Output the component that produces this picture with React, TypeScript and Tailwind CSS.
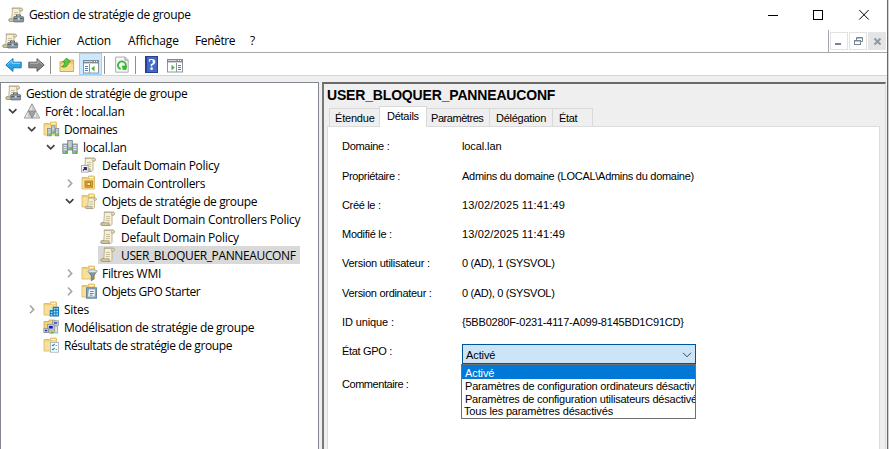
import type { ReactNode } from "react";

function Svg({ children }: { children: ReactNode }) {
  return (
    <svg width="16" height="16" viewBox="0 0 16 16" className="shrink-0 overflow-visible">
      {children}
    </svg>
  );
}

function ScrollShape() {
  return (
    <>
      <path d="M4 1.2h9c2 0 2 2.8.2 2.8H12v8.5c0 1.4-.8 2-2 2H2c-1.7 0-1.7-3 0-3h1.8L4.4 3Z" fill="#f6f0d8" stroke="#b5ab8e" strokeWidth=".9" />
      <path d="M4 1.2h9c2 0 2 2.8.2 2.8H12c-.8 0-.8-1.5 0-1.5" fill="#e9dfbb" stroke="#a79c7c" strokeWidth=".8" />
      <path d="M1.8 11.8h7.4c-.4 1 0 2.6.8 2.6H2c-1.2 0-1.5-1.8-.2-2.6Z" fill="#d9cba3" stroke="#978b6e" strokeWidth=".7" />
      <path d="M6 5.5h4M6 7.5h4M5.8 9.5h4" stroke="#c3b998" strokeWidth=".9" />
    </>
  );
}

function FolderShape() {
  return (
    <>
      <path d="M1 2.5h5l1.3 1V2c0-.8.3-1 1-1h4.2c.8 0 1 .3 1 1v12H1Z" fill="#edcf77" stroke="#d8b35c" strokeWidth=".8" />
      <path d="M8.3 1.8h4.2v1.4H8.3Z" fill="#fff6d2" />
      <path d="M1.5 4.3h11.6v9.2H1.5Z" fill="#f9e09a" />
    </>
  );
}

function ServersShape() {
  return (
    <>
      {[
        [0.8, 5],
        [10.6, 5],
        [5.7, 1.5],
      ].map(([x, y]) => (
        <g key={x}>
          <rect x={x} y={y} width="4.6" height="9.5" fill="#a6b3bb" stroke="#73818b" strokeWidth=".8" />
          <path d={`M${x + 0.8} ${y + 1.5}h3M${x + 0.8} ${y + 3.5}h3M${x + 0.8} ${y + 5.5}h3`} stroke="#e6ecf0" strokeWidth=".9" />
          <rect x={x + 2.2} y={y + 7} width="2" height="2" fill="#3ed321" />
        </g>
      ))}
    </>
  );
}

const Scroll = () => (
  <Svg>
    <ScrollShape />
  </Svg>
);

const Console = () => (
  <Svg>
    <ScrollShape />
    <path d="M8.5 9.5V8h4v1.5" fill="none" stroke="#4e5a63" />
    <rect x="5.8" y="9.7" width="9.8" height="5.2" rx=".6" fill="#8d9dab" stroke="#5d6a76" strokeWidth=".8" />
    <path d="M6.2 11.6h9" stroke="#505d68" />
    <rect x="9.7" y="10.9" width="2" height="1.7" fill="#dbe3e9" />
  </Svg>
);

const Forest = () => (
  <Svg>
    <path d="M8 .8 15.6 15H.4Z" fill="#ababab" stroke="#8c8c8c" strokeWidth=".9" strokeLinejoin="round" />
    <path d="M8 2 4.7 7.8h6.6ZM4 8.8l-3 5.6h6ZM12 8.8l-3 5.6h6Z" fill="#e6e6e6" />
    <path d="M8 2v5.8h3.3ZM4 8.8v5.6h3ZM12 8.8v5.6h3Z" fill="#c9c9c9" />
    <path d="M4.4 8h7.2L8 14.4Z" fill="#a2a2a2" stroke="#7d7d7d" strokeWidth=".6" />
  </Svg>
);

const Domains = () => (
  <Svg>
    <FolderShape />
    <g transform="translate(4 3.6) scale(.78)">
      <ServersShape />
    </g>
  </Svg>
);

const Domain = () => (
  <Svg>
    <ServersShape />
  </Svg>
);

const Shortcut = () => (
  <Svg>
    <ScrollShape />
    <rect x=".5" y="8.5" width="6.6" height="6.6" fill="#fff" stroke="#a8a8a8" />
    <path d="M2 13.6l2.8-2.8M2.6 10.6h2.6v2.6" fill="none" stroke="#26267c" strokeWidth="1.4" />
  </Svg>
);

const Unit = () => (
  <Svg>
    <FolderShape />
    <rect x="4" y="6" width="7.6" height="6.2" fill="#dba72d" stroke="#b98724" />
    <rect x="6" y="7.6" width="3.6" height="3" fill="#ffeaa5" stroke="#a57316" strokeWidth=".8" />
  </Svg>
);

const PolicyFolder = () => (
  <Svg>
    <FolderShape />
    <g transform="translate(3.8 4) scale(.8)">
      <ScrollShape />
    </g>
  </Svg>
);

const FilterFolder = () => (
  <Svg>
    <FolderShape />
    <path d="M7 6.3h9l-3.3 4.4v3.6l-2.4 1.4v-5Z" fill="#7d94a6" stroke="#526a7d" strokeWidth=".7" />
    <ellipse cx="11.5" cy="6.2" rx="4.5" ry="1.5" fill="#dce7ee" stroke="#8296a5" strokeWidth=".7" />
  </Svg>
);

const StarterFolder = () => (
  <Svg>
    <FolderShape />
    <rect x="5.4" y="4.8" width="10.2" height="10.4" fill="#86a5bc" stroke="#587890" strokeWidth=".8" />
    <path d="M8 6.5h6l-.5 7H7Z" fill="#f5f8fa" />
    <path d="M9 8.5h3.7M8.8 10.5h3.7M8.6 12.2h3" stroke="#5b7d97" strokeWidth=".9" />
  </Svg>
);

const SitesFolder = () => (
  <Svg>
    <FolderShape />
    <path d="M6.7 9h3V5.7H16v9.8H6.7Z" fill="#1677bc" />
    <path d="M10.8 7h1.6v1.6h-1.6ZM13.4 7H15v1.6h-1.6ZM10.8 9.8h1.6v1.6h-1.6ZM13.4 9.8H15v1.6h-1.6ZM7.8 10.4h1.6V12H7.8ZM7.8 13h1.6v1.5H7.8ZM10.8 12.6h1.6v1.6h-1.6ZM13.4 12.6H15v1.6h-1.6Z" fill="#a6e2ff" />
  </Svg>
);

const Modeling = () => (
  <Svg>
    <path d="M1 2.5h5V1h6v12H1Z" fill="#f3d27b" stroke="#cfa64b" strokeWidth=".8" />
    <rect x="9.5" y="1.8" width="6" height="4.4" fill="#d9dfe2" stroke="#8c969c" strokeWidth=".8" />
    <rect x="10.8" y="2.9" width="3.4" height="2" fill="#4a60cc" />
    <rect x="4.5" y="5.5" width="6.5" height="5.5" fill="#dfe4e7" stroke="#8c969c" strokeWidth=".8" />
    <rect x="5.8" y="6.8" width="4" height="2.8" fill="#1520bd" />
    <rect x="11.7" y="7" width="3" height="7" fill="#dde1e3" stroke="#979fa4" strokeWidth=".8" />
    <rect x="1" y="9.8" width="4.4" height="3.8" fill="#dfe4e7" stroke="#7a858c" strokeWidth=".8" />
    <rect x="2" y="10.8" width="2.4" height="1.6" fill="#2233c4" />
    <path d="M6 12.8h5v2H6Z" fill="#aeb8be" />
    <path d="M8 13.5h2" stroke="#31c231" />
  </Svg>
);

const Results = () => (
  <Svg>
    <FolderShape />
    <rect x="7.4" y="5.4" width="8.2" height="9.8" fill="#f9fbfc" stroke="#a1aeb7" strokeWidth=".8" />
    <path d="m9 7.8 1 1 1.6-2M9 11.8l1 1 1.6-2" fill="none" stroke="#2587bd" strokeWidth="1.1" />
    <path d="M12.5 8.5H14M12.5 12.5H14" stroke="#8d9aa3" />
  </Svg>
);

function Arrow({ back }: { back?: boolean }) {
  return (
    <svg width="17" height="16" viewBox="0 0 17 16" className={back ? "shrink-0" : "shrink-0 -scale-x-100"}>
      <path
        d="M.8 8 8 1.6v3.6h8.2v5.6H8v3.6Z"
        fill={back ? "#29a5e8" : "#858585"}
        stroke={back ? "#1777b9" : "#606060"}
        strokeLinejoin="round"
      />
      <path d="M2.5 7.6 7 3.6v2.7h8" fill="none" stroke={back ? "#8fdcff" : "#b5b5b5"} />
    </svg>
  );
}

const UpFolder = () => (
  <svg width="16" height="16" viewBox="0 0 16 16">
    <path d="M1 4.8h5L7.5 3H14.6V14.5H1Z" fill="#efcc72" stroke="#c9a352" strokeWidth=".9" />
    <path d="M1.6 7.2h12.5v6.8H1.6Z" fill="#f8dd92" />
    <path d="M2.5 9.6C5 9 5.6 7.4 5.6 5H3.6L7.6 1 11.5 5H9.4c0 4-3 6.2-6.9 4.6Z" fill="#5ac83c" stroke="#2e9020" strokeWidth=".7" />
  </svg>
);

function PaneIcon({ right }: { right?: boolean }) {
  return (
    <svg width="16" height="15" viewBox="0 0 16 15">
      <rect x=".5" y="1.5" width="15" height="12.5" fill="#fff" stroke="#8d969e" />
      <path d="M0 1h16v4H0Z" fill="#808a93" />
      <path d="M1 2.5h8.5M1 4.5h14" stroke="#dfe5e9" strokeWidth=".8" />
      <path d="M11 2.5h1M13 2.5h1" stroke="#fff" />
      {right ? (
        <g>
          <path d="M9.5 5v9" stroke="#8d969e" />
          <path d="M11 7.5h3M11 9.5h3M11 11.5h3" stroke="#4783b4" />
          <path d="m4.5 6.8 3.2 2.8-3.2 2.8Z" fill="#42b535" />
        </g>
      ) : (
        <g>
          <path d="M6.5 5v9" stroke="#8d969e" />
          <path d="M2 7.5h3M2 9.5h3M2 11.5h3" stroke="#4783b4" />
          <path d="m11.5 6.8-3.2 2.8 3.2 2.8Z" fill="#42b535" />
        </g>
      )}
    </svg>
  );
}

const Refresh = () => (
  <svg width="14" height="17" viewBox="0 0 14 17">
    <path d="M.6 1h9.6l3 3v12.2H.6Z" fill="#f6f6f6" stroke="#b0b0b0" />
    <path d="M10 1v3.2h3.2" fill="#ddd" stroke="#a2a2a2" />
    <path d="M5.6 13A3.9 3.9 0 1 1 10.6 10.5" fill="none" stroke="#39b634" strokeWidth="1.9" />
    <path d="M7 9.6 12.2 10l-1 4-3.6-.2Z" fill="#39b634" />
  </svg>
);

const Help = () => (
  <div className="flex h-[17px] w-[13px] items-center justify-center border border-l-2 border-[#25418f] bg-[#4567c8] font-['Liberation_Serif',serif] text-[16px] leading-none font-bold text-white">
    ?
  </div>
);

type Item = { level: number; label: string; icon: () => ReactNode; open?: boolean; closed?: boolean; selected?: boolean; track: string };

const tree: Item[] = [
  { level: 1, label: "Forêt : local.lan", icon: Forest, open: true, track: "tracking-[-0.3px]" },
  { level: 2, label: "Domaines", icon: Domains, open: true, track: "tracking-[-0.4px]" },
  { level: 3, label: "local.lan", icon: Domain, open: true, track: "tracking-[-0.25px]" },
  { level: 4, label: "Default Domain Policy", icon: Shortcut, track: "tracking-[-0.3px]" },
  { level: 4, label: "Domain Controllers", icon: Unit, closed: true, track: "tracking-[-0.34px]" },
  { level: 4, label: "Objets de stratégie de groupe", icon: PolicyFolder, open: true, track: "tracking-[-0.38px]" },
  { level: 5, label: "Default Domain Controllers Policy", icon: Scroll, track: "tracking-[-0.28px]" },
  { level: 5, label: "Default Domain Policy", icon: Scroll, track: "tracking-[-0.27px]" },
  { level: 5, label: "USER_BLOQUER_PANNEAUCONF", icon: Scroll, selected: true, track: "tracking-[-0.37px]" },
  { level: 4, label: "Filtres WMI", icon: FilterFolder, closed: true, track: "tracking-[-0.3px]" },
  { level: 4, label: "Objets GPO Starter", icon: StarterFolder, closed: true, track: "tracking-[-0.45px]" },
  { level: 2, label: "Sites", icon: SitesFolder, closed: true, track: "tracking-[-0.3px]" },
  { level: 2, label: "Modélisation de stratégie de groupe", icon: Modeling, track: "tracking-[-0.34px]" },
  { level: 2, label: "Résultats de stratégie de groupe", icon: Results, track: "tracking-[-0.4px]" },
];

const indents = ["", "pl-[5px]", "pl-[24px]", "pl-[43px]", "pl-[62px]", "pl-[81px]"];

function TreeRow({ item }: { item: Item }) {
  const Icon = item.icon;
  return (
    <div className={`flex h-[18px] items-center ${indents[item.level]}`}>
      <div className="w-[16px] shrink-0">
        {(item.open || item.closed) && (
          <svg width="12" height="12" viewBox="0 0 12 12" className="ml-px">
            {item.open ? (
              <path d="m2 4.2 3.7 3.7 3.7-3.7" fill="none" stroke="#404040" strokeWidth="1.7" />
            ) : (
              <path d="m4 2.5 3.7 3.9L4 10.3" fill="none" stroke="#a6a6a6" strokeWidth="1.6" />
            )}
          </svg>
        )}
      </div>
      <div className={`flex h-[18px] items-center pl-[2px] whitespace-nowrap ${item.selected ? "w-[202px] bg-[#d9d9d9]" : ""}`}>
        <Icon />
        <span className={`ml-[5px] pt-px leading-[19px] ${item.track}`}>{item.label}</span>
      </div>
    </div>
  );
}

const details = [
  { label: "Domaine :", value: "local.lan", h: "h-[30px]", lt: "tracking-[-0.3px]", vt: "tracking-[-0.1px]" },
  { label: "Propriétaire :", value: "Admins du domaine (LOCAL\\Admins du domaine)", h: "h-[29px]", lt: "tracking-[-0.35px]", vt: "tracking-[-0.28px]" },
  { label: "Créé le :", value: "13/02/2025 11:41:49", h: "h-[29px]", lt: "tracking-[-0.33px]", vt: "tracking-[0.16px]" },
  { label: "Modifié le :", value: "13/02/2025 11:41:49", h: "h-[29px]", lt: "tracking-[-0.28px]", vt: "tracking-[0.16px]" },
  { label: "Version utilisateur :", value: "0 (AD), 1 (SYSVOL)", h: "h-[30px]", lt: "tracking-[-0.25px]", vt: "tracking-[-0.33px]" },
  { label: "Version ordinateur :", value: "0 (AD), 0 (SYSVOL)", h: "h-[29px]", lt: "tracking-[-0.29px]", vt: "tracking-[-0.33px]" },
  { label: "ID unique :", value: "{5BB0280F-0231-4117-A099-8145BD1C91CD}", h: "h-[29px]", lt: "tracking-[-0.12px]", vt: "tracking-[-0.21px]" },
];

const choices = [
  { label: "Paramètres de configuration ordinateurs désactiv", track: "tracking-[-0.21px]" },
  { label: "Paramètres de configuration utilisateurs désactivé", track: "tracking-[-0.23px]" },
  { label: "Tous les paramètres désactivés", track: "tracking-[-0.17px]" },
];

export default function App() {
  return (
    <div className="flex h-[449px] w-[889px] overflow-hidden bg-white font-['Open_Sans','Noto_Sans',sans-serif] text-[12px] text-black">
      <div className="flex min-w-0 flex-1 flex-col">
        <header className="flex h-[28px] shrink-0 items-center pt-[2px] pl-[8px]">
          <Console />
          <span className="ml-[5px] tracking-[-0.37px]">Gestion de stratégie de groupe</span>
          <svg width="120" height="12" viewBox="0 0 120 12" className="mr-[12px] ml-auto" fill="none" stroke="#000">
            <path d="M13 6.5h10M104.3 1l9.4 9.5M113.7 1l-9.4 9.5" />
            <rect x="58.5" y="1.5" width="9" height="9" />
          </svg>
        </header>

        <nav className="flex h-[25px] shrink-0 border-b border-[#a9a9a9]">
          <div className="flex flex-1 items-center pt-px pl-[2px]">
            <Console />
            <span className="ml-[8px] w-[51px] tracking-[-0.3px]">Fichier</span>
            <span className="w-[51px] tracking-[-0.2px]">Action</span>
            <span className="w-[67px] tracking-[-0.1px]">Affichage</span>
            <span className="w-[55px] tracking-[-0.4px]">Fenêtre</span>
            <span>?</span>
          </div>
          <div className="mt-[2px] mr-px flex gap-px border-l border-[#a0a4ae] pt-[2px] pl-px">
            <div className="h-[18px] w-[18px] border border-[#e2e2e2]">
              <svg width="16" height="16" viewBox="0 0 16 16">
                <path d="M4 11h6" stroke="#768696" strokeWidth="2" />
              </svg>
            </div>
            <div className="h-[18px] w-[18px] border border-[#e2e2e2]">
              <svg width="16" height="16" viewBox="0 0 16 16" fill="none" stroke="#768696">
                <path d="M6.5 7V4.5h6v4H11M6 5h7M4 8h7" />
                <rect x="4.5" y="7.5" width="6" height="4" />
              </svg>
            </div>
            <div className="h-[18px] w-[18px] bg-[#e5e5e5]">
              <svg width="18" height="18" viewBox="0 0 18 18">
                <path d="m6.5 6.5 6 6M12.5 6.5l-6 6" stroke="#8b9baa" strokeWidth="2" />
              </svg>
            </div>
          </div>
        </nav>

        <div className="flex h-[23px] shrink-0 items-center border-b border-[#d4d4d4] pt-px pl-[5px]">
          <Arrow back />
          <div className="ml-[6px]">
            <Arrow />
          </div>
          <div className="ml-[5px] h-[18px] w-px bg-[#8e8e8e]" />
          <div className="ml-[8px]">
            <UpFolder />
          </div>
          <div className="-mt-px ml-[4px] flex h-[22px] w-[23px] items-center justify-center border border-[#99d1ff] bg-[#cce8ff] pt-[4px]">
            <PaneIcon />
          </div>
          <div className="ml-[2px] h-[18px] w-px bg-[#8e8e8e]" />
          <div className="ml-[10px]">
            <Refresh />
          </div>
          <div className="ml-[6px] h-[18px] w-px bg-[#8e8e8e]" />
          <div className="ml-[9px]">
            <Help />
          </div>
          <div className="ml-[9px] pt-[2px]">
            <PaneIcon right />
          </div>
        </div>

        <main className="flex flex-1 bg-[#efefef] pt-[6px]">
          <aside className="w-[319px] shrink-0 border-x border-t border-[#828790] bg-white pt-px">
            <div className="flex h-[18px] items-center pl-[4px]">
              <Console />
              <span className="ml-[5px] pt-px leading-[19px] tracking-[-0.38px]">Gestion de stratégie de groupe</span>
            </div>
            {tree.map((item, i) => (
              <TreeRow key={i} item={item} />
            ))}
          </aside>

          <section className="mr-px ml-[3px] flex flex-1 flex-col border-t-2 border-r border-l-2 border-t-[#696969] border-r-[#dcdcdc] border-l-[#777] pr-[5px] pl-[3px] font-['Liberation_Sans',sans-serif] text-[11px]">
            <h1 className="h-[22px] text-[14px] leading-[23px] font-bold tracking-[-0.17px]">USER_BLOQUER_PANNEAUCONF</h1>
            <div className="flex h-[20px] items-end pl-[2px]">
              <div className="h-[18px] w-[50px] border-t border-l border-[#d9d9d9] pl-[5px] leading-[19px] tracking-[-0.2px]">Étendue</div>
              <div className="z-10 -mb-px h-[21px] w-[48px] border border-b-0 border-[#d9d9d9] bg-white pl-[7px] leading-[19px] tracking-[-0.25px]">Détails</div>
              <div className="h-[18px] w-[62px] border-t border-[#d9d9d9] pl-[4px] leading-[19px] tracking-[-0.45px]">Paramètres</div>
              <div className="h-[18px] w-[63px] border-t border-l border-[#d9d9d9] pl-[6px] leading-[19px] tracking-[-0.25px]">Délégation</div>
              <div className="h-[18px] w-[41px] border-x border-t border-[#d9d9d9] pl-[6px] leading-[19px] tracking-[-0.3px]">État</div>
            </div>
            <div className="flex-1 border-x border-t border-[#dcdcdc] bg-white pt-[4px] pl-[14px]">
              {details.map((d) => (
                <div key={d.label} className={`flex leading-[30px] whitespace-nowrap ${d.h}`}>
                  <span className={`w-[120px] shrink-0 ${d.lt}`}>{d.label}</span>
                  <span className={d.vt}>{d.value}</span>
                </div>
              ))}
              <div className="flex h-[33px] leading-[30px]">
                <span className="w-[120px] shrink-0 tracking-[-0.33px]">État GPO :</span>
                <div className="relative mt-[8px] h-[20px] w-[234px] border border-[#005499] bg-[#cce4f7] pl-[3px] leading-[20px] tracking-[-0.1px]">
                  Activé
                  <svg width="10" height="6" viewBox="0 0 10 6" className="absolute top-[7px] right-[3px]">
                    <path d="m1 .8 4 4 4-4" fill="none" stroke="#444" />
                  </svg>
                  <ul className="absolute top-[19px] left-[-2px] h-[55px] w-[235px] overflow-hidden border border-[#707070] bg-white whitespace-nowrap">
                    <li className="h-[14px] bg-[#0078d7] pl-[3px] leading-[16px] text-white">Activé</li>
                    {choices.map((c) => (
                      <li key={c.label} className={`h-[13px] pl-[3px] leading-[14px] last:pl-[2px] last:leading-[13px] ${c.track}`}>
                        {c.label}
                      </li>
                    ))}
                  </ul>
                </div>
              </div>
              <div className="leading-[30px] tracking-[-0.45px]">Commentaire :</div>
            </div>
          </section>
        </main>
      </div>
      <div className="w-[2px] shrink-0 border-r border-l border-l-[#696969] border-r-[#d0d0d0]" />
    </div>
  );
}
